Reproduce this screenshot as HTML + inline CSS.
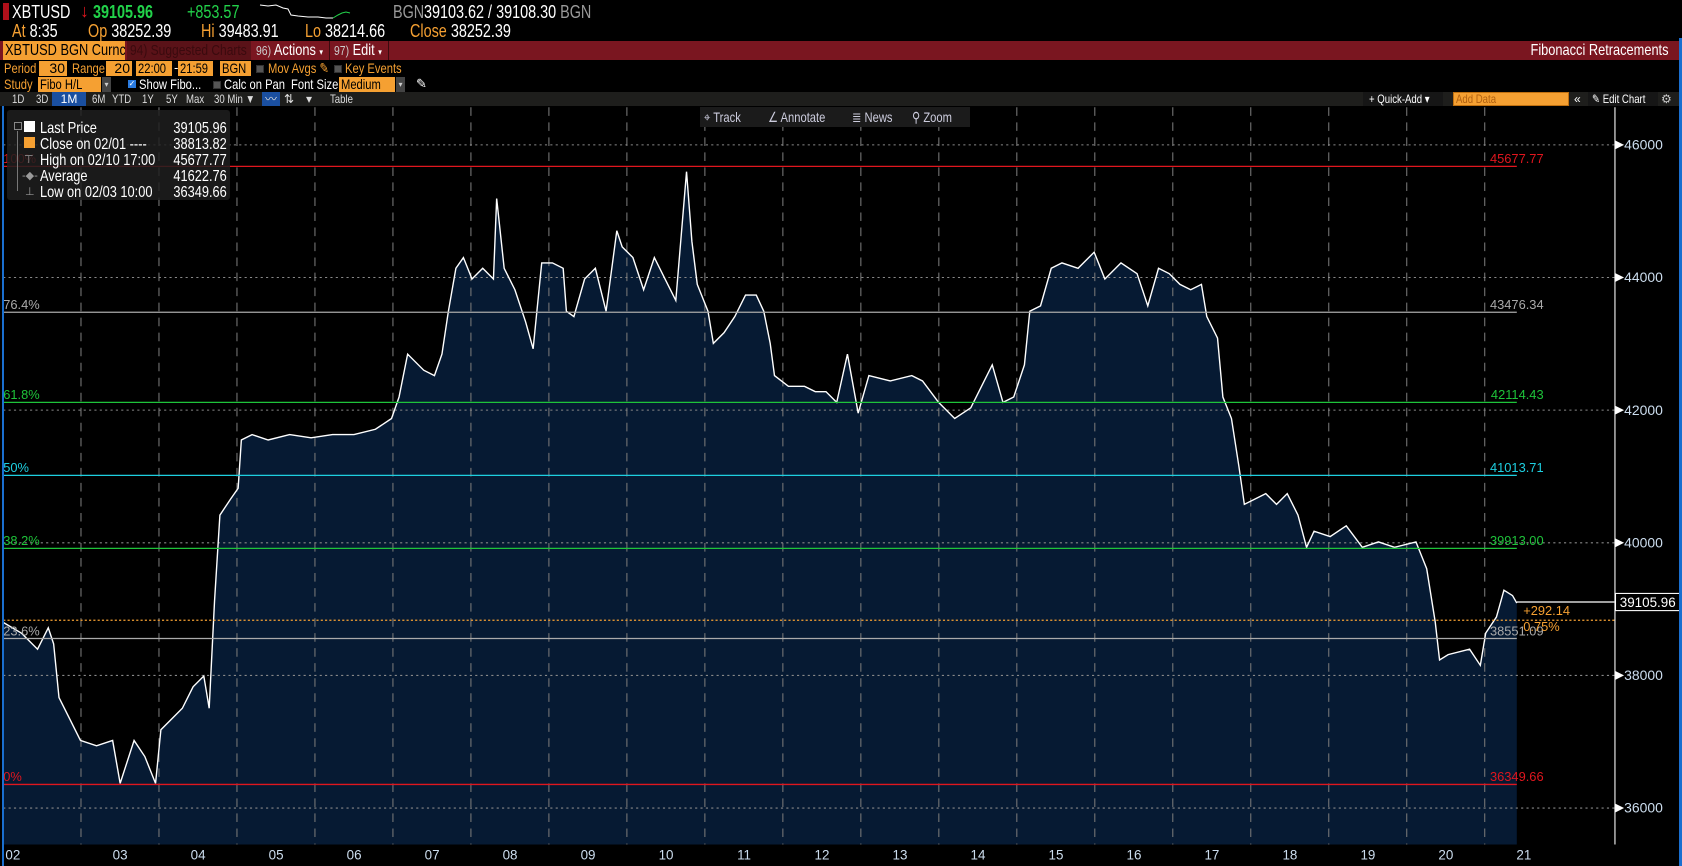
<!DOCTYPE html>
<html><head><meta charset="utf-8"><style>
*{margin:0;padding:0;box-sizing:border-box}
body{width:1682px;height:866px;background:#000;overflow:hidden;position:relative;font-family:"Liberation Sans",sans-serif;color:#fff}
.a{position:absolute;white-space:nowrap;line-height:1}
.n{display:inline-block;transform:scaleX(.8);transform-origin:0 50%;white-space:nowrap}
.r{transform-origin:100% 50%}
.o{color:#f5a032}.g{color:#22d24a}.w{color:#fff}.gr{color:#9a9a9a}
.box{position:absolute;background:#f5a032;color:#000;font-size:14px;line-height:15px;height:15px;padding:0 2px;overflow:hidden;white-space:nowrap}
.cb{position:absolute;width:8px;height:8px;background:#555;border:1px solid #333}
.s{font-size:14px;color:#f5a032}
.tab{position:absolute;top:92px;height:14px;font-size:12px;line-height:14px;color:#ddd;white-space:nowrap}
</style></head><body>
<svg style="position:absolute;left:0;top:0" width="1682" height="866" viewBox="0 0 1568 807" preserveAspectRatio="none">
<rect x="0" y="100" width="1414" height="687" fill="#000"/>
<polygon fill="#061a33" points="3,787 3,580 20,590 35,605 45,585 50,600 55,650 65,670 75,690 90,695 105,690 112,730 125,690 135,705 145,730 150,680 160,670 170,660 180,640 190,630 195,660 200,560 205,480 215,465 222,455 225,410 235,405 250,410 270,405 290,408 310,405 330,405 350,400 365,390 372,370 380,330 395,345 405,350 412,330 418,290 425,250 432,240 440,260 450,250 460,260 463,185 470,250 480,270 490,300 497,325 505,245 515,245 525,250 528,290 535,295 545,260 555,250 565,290 575,215 580,230 590,240 600,270 610,240 620,260 630,280 640,160 645,225 650,265 660,290 665,320 675,310 685,295 695,275 705,275 712,290 718,320 722,350 735,360 750,360 760,365 770,365 780,375 790,330 800,385 810,350 830,355 850,350 860,355 875,375 890,390 905,380 915,360 925,340 935,375 945,370 955,340 960,290 970,285 980,250 990,245 1005,250 1020,235 1030,260 1045,245 1060,255 1070,285 1080,250 1090,255 1100,265 1110,270 1120,265 1125,295 1135,315 1140,370 1148,390 1155,435 1160,470 1170,465 1180,460 1190,470 1200,460 1210,480 1218,510 1225,495 1240,500 1255,490 1270,510 1285,505 1300,510 1320,505 1330,530 1338,580 1342,615 1350,610 1370,605 1380,620 1385,590 1395,575 1402,550 1410,555 1414,562 1414,787"/>
<g stroke="#777" stroke-dasharray="8 6" stroke-width="1">
<line x1="75.5" y1="100" x2="75.5" y2="787"/><line x1="148.2" y1="100" x2="148.2" y2="787"/><line x1="220.9" y1="100" x2="220.9" y2="787"/><line x1="293.6" y1="100" x2="293.6" y2="787"/><line x1="366.3" y1="100" x2="366.3" y2="787"/><line x1="439" y1="100" x2="439" y2="787"/><line x1="511.7" y1="100" x2="511.7" y2="787"/><line x1="584.4" y1="100" x2="584.4" y2="787"/><line x1="657.1" y1="100" x2="657.1" y2="787"/><line x1="729.8" y1="100" x2="729.8" y2="787"/><line x1="802.5" y1="100" x2="802.5" y2="787"/><line x1="875.2" y1="100" x2="875.2" y2="787"/><line x1="947.9" y1="100" x2="947.9" y2="787"/><line x1="1020.6" y1="100" x2="1020.6" y2="787"/><line x1="1093.3" y1="100" x2="1093.3" y2="787"/><line x1="1166" y1="100" x2="1166" y2="787"/><line x1="1238.7" y1="100" x2="1238.7" y2="787"/><line x1="1311.4" y1="100" x2="1311.4" y2="787"/><line x1="1384.1" y1="100" x2="1384.1" y2="787"/>
</g>
<g stroke="#888" stroke-dasharray="2 3" stroke-width="1">
<line x1="3" y1="135" x2="1505" y2="135"/><line x1="3" y1="258.6" x2="1505" y2="258.6"/><line x1="3" y1="382.2" x2="1505" y2="382.2"/><line x1="3" y1="505.8" x2="1505" y2="505.8"/><line x1="3" y1="629.4" x2="1505" y2="629.4"/><line x1="3" y1="753" x2="1505" y2="753"/>
</g>
<polyline fill="none" stroke="#fff" stroke-width="1.3" points="3,580 20,590 35,605 45,585 50,600 55,650 65,670 75,690 90,695 105,690 112,730 125,690 135,705 145,730 150,680 160,670 170,660 180,640 190,630 195,660 200,560 205,480 215,465 222,455 225,410 235,405 250,410 270,405 290,408 310,405 330,405 350,400 365,390 372,370 380,330 395,345 405,350 412,330 418,290 425,250 432,240 440,260 450,250 460,260 463,185 470,250 480,270 490,300 497,325 505,245 515,245 525,250 528,290 535,295 545,260 555,250 565,290 575,215 580,230 590,240 600,270 610,240 620,260 630,280 640,160 645,225 650,265 660,290 665,320 675,310 685,295 695,275 705,275 712,290 718,320 722,350 735,360 750,360 760,365 770,365 780,375 790,330 800,385 810,350 830,355 850,350 860,355 875,375 890,390 905,380 915,360 925,340 935,375 945,370 955,340 960,290 970,285 980,250 990,245 1005,250 1020,235 1030,260 1045,245 1060,255 1070,285 1080,250 1090,255 1100,265 1110,270 1120,265 1125,295 1135,315 1140,370 1148,390 1155,435 1160,470 1170,465 1180,460 1190,470 1200,460 1210,480 1218,510 1225,495 1240,500 1255,490 1270,510 1285,505 1300,510 1320,505 1330,530 1338,580 1342,615 1350,610 1370,605 1380,620 1385,590 1395,575 1402,550 1410,555 1414,562"/>
<g stroke-width="1.2">
<line x1="3" y1="155" x2="1414" y2="155" stroke="#e0161e"/>
<line x1="3" y1="291" x2="1414" y2="291" stroke="#aaa"/>
<line x1="3" y1="375" x2="1414" y2="375" stroke="#1ec33a"/>
<line x1="3" y1="443" x2="1414" y2="443" stroke="#1ecfe0"/>
<line x1="3" y1="511" x2="1414" y2="511" stroke="#1ec33a"/>
<line x1="3" y1="595" x2="1414" y2="595" stroke="#aaa"/>
<line x1="3" y1="731" x2="1414" y2="731" stroke="#e0161e"/>
<line x1="3" y1="578" x2="1505" y2="578" stroke="#f5a032" stroke-dasharray="2 2"/>
<line x1="1414" y1="561" x2="1505" y2="561" stroke="#fff"/>
</g>
<g font-family="Liberation Sans, sans-serif" font-size="12">
<text x="3" y="152" fill="#e0161e">100%</text><text x="1439" y="152" fill="#e0161e" text-anchor="end">45677.77</text>
<text x="3" y="288" fill="#aaa">76.4%</text><text x="1439" y="288" fill="#aaa" text-anchor="end">43476.34</text>
<text x="3" y="372" fill="#1ec33a">61.8%</text><text x="1439" y="372" fill="#1ec33a" text-anchor="end">42114.43</text>
<text x="3" y="440" fill="#1ecfe0">50%</text><text x="1439" y="440" fill="#1ecfe0" text-anchor="end">41013.71</text>
<text x="3" y="508" fill="#1ec33a">38.2%</text><text x="1439" y="508" fill="#1ec33a" text-anchor="end">39913.00</text>
<text x="3" y="592" fill="#aaa">23.6%</text><text x="1439" y="592" fill="#aaa" text-anchor="end">38551.09</text>
<text x="3" y="728" fill="#e0161e">0%</text><text x="1439" y="728" fill="#e0161e" text-anchor="end">36349.66</text>
<text x="1420" y="573" fill="#f5a032">+292.14</text><text x="1420" y="588" fill="#f5a032">0.75%</text>
</g>
<line x1="1505.5" y1="100" x2="1505.5" y2="787" stroke="#fff" stroke-width="1"/>
<g font-family="Liberation Sans, sans-serif" font-size="13" fill="#cde">
<text x="1514" y="139.5">46000</text><text x="1514" y="263">44000</text><text x="1514" y="386.5">42000</text><text x="1514" y="510">40000</text><text x="1514" y="633.5">38000</text><text x="1514" y="757">36000</text>
</g>
<g fill="#fff"><path d="M1506 131l8 4-8 4z"/><path d="M1506 254.6l8 4-8 4z"/><path d="M1506 378.2l8 4-8 4z"/><path d="M1506 501.8l8 4-8 4z"/><path d="M1506 625.4l8 4-8 4z"/><path d="M1506 749l8 4-8 4z"/></g>
<rect x="1506" y="553" width="61" height="16" fill="#000" stroke="#fff"/>
<text x="1510" y="565.5" font-family="Liberation Sans, sans-serif" font-size="12.5" fill="#fff">39105.96</text>
<g font-family="Liberation Sans, sans-serif" font-size="12.5" fill="#cde" text-anchor="middle">
<text x="12" y="801">02</text><text x="112" y="801">03</text><text x="184.7" y="801">04</text><text x="257.4" y="801">05</text><text x="330.1" y="801">06</text><text x="402.8" y="801">07</text><text x="475.5" y="801">08</text><text x="548.2" y="801">09</text><text x="620.9" y="801">10</text><text x="693.6" y="801">11</text><text x="766.3" y="801">12</text><text x="839" y="801">13</text><text x="911.7" y="801">14</text><text x="984.4" y="801">15</text><text x="1057.1" y="801">16</text><text x="1129.8" y="801">17</text><text x="1202.5" y="801">18</text><text x="1275.2" y="801">19</text><text x="1347.9" y="801">20</text><text x="1420.6" y="801">21</text>
</g>
</svg>
<div style="position:absolute;left:2px;top:92px;width:2px;height:774px;background:#1a6fd0"></div>
<div style="position:absolute;left:1679px;top:38px;width:3px;height:828px;background:#1a6fd0"></div>

<!-- header -->
<div style="position:absolute;left:3px;top:3px;width:6px;height:17px;background:#b0101a"></div>
<div class="a w" style="left:12px;top:3px;font-size:18px"><span class="n">XBTUSD</span></div>
<div class="a" style="left:80px;top:2px;font-size:18px;color:#e0161e">↓</div>
<div class="a g" style="left:93px;top:3px;font-size:18px;font-weight:bold"><span class="n">39105.96</span></div>
<div class="a g" style="left:187px;top:3px;font-size:18px"><span class="n">+853.57</span></div>
<svg style="position:absolute;left:258px;top:3px" width="95" height="18"><polyline fill="none" stroke="#fff" stroke-width="1" points="2,2 10,3 18,2 25,5 30,6 33,12 40,13 50,14 60,14 68,15 75,15"/><polyline fill="none" stroke="#22d24a" stroke-width="1" points="75,15 80,12 84,10 88,9 92,10"/></svg>
<div class="a gr" style="left:393px;top:3px;font-size:18px"><span class="n">BGN</span></div>
<div class="a w" style="left:424px;top:3px;font-size:18px"><span class="n">39103.62 / 39108.30 <span class="gr">BGN</span></span></div>
<div class="a" style="left:12px;top:22px;font-size:18px"><span class="n"><span class="o">At</span> 8:35</span></div>
<div class="a" style="left:88px;top:22px;font-size:18px"><span class="n"><span class="o">Op</span> 38252.39</span></div>
<div class="a" style="left:201px;top:22px;font-size:18px"><span class="n"><span class="o">Hi</span> 39483.91</span></div>
<div class="a" style="left:305px;top:22px;font-size:18px"><span class="n"><span class="o">Lo</span> 38214.66</span></div>
<div class="a" style="left:410px;top:22px;font-size:18px"><span class="n"><span class="o">Close</span> 38252.39</span></div>

<div style="position:absolute;left:0;top:41px;width:1679px;height:19px;background:#7a1620"></div>
<div class="a" style="left:3px;top:41px;width:122px;height:19px;background:#f5a032;color:#000;font-size:16px;line-height:19px;padding-left:2px;overflow:hidden"><span class="n">XBTUSD BGN Curncy</span></div>
<div class="a" style="left:127px;top:41px;width:124px;height:19px;background:#5a1218;color:#3a0a0e;font-size:15px;line-height:19px;padding-left:3px;overflow:hidden"><span class="n">94) Suggested Charts</span></div>
<div class="a" style="left:256px;top:41px;height:19px;font-size:16px;line-height:19px"><span class="n"><span style="color:#ccc;font-size:13px">96)</span> Actions <span style="font-size:9px">▾</span></span></div>
<div class="a" style="left:329px;top:41px;width:1px;height:19px;background:#3a0a0e"></div>
<div class="a" style="left:334px;top:41px;height:19px;font-size:16px;line-height:19px"><span class="n"><span style="color:#ccc;font-size:13px">97)</span> Edit <span style="font-size:9px">▾</span></span></div>
<div class="a" style="left:388px;top:41px;width:1px;height:19px;background:#3a0a0e"></div>
<div class="a w" style="left:1469px;top:43px;width:200px;text-align:right;font-size:16px"><span class="n r">Fibonacci Retracements</span></div>

<div class="a s" style="left:4px;top:61px"><span class="n">Period</span></div>
<div class="box" style="left:39px;top:61px;width:28px;text-align:right">30</div>
<div class="a s" style="left:72px;top:61px"><span class="n">Range</span></div>
<div class="box" style="left:106px;top:61px;width:26px;text-align:right">20</div>
<div class="box" style="left:136px;top:61px;width:36px"><span class="n">22:00</span></div>
<div class="a w" style="left:174px;top:61px;font-size:13px">-</div>
<div class="box" style="left:178px;top:61px;width:35px"><span class="n">21:59</span></div>
<div class="box" style="left:220px;top:61px;width:31px"><span class="n">BGN</span></div>
<div class="cb" style="left:256px;top:65px"></div>
<div class="a s" style="left:268px;top:61px"><span class="n">Mov Avgs ✎</span></div>
<div class="cb" style="left:334px;top:65px"></div>
<div class="a s" style="left:345px;top:61px"><span class="n">Key Events</span></div>

<div class="a s" style="left:4px;top:77px"><span class="n">Study</span></div>
<div class="box" style="left:38px;top:77px;width:63px"><span class="n">Fibo H/L</span></div>
<div class="a" style="left:102px;top:77px;width:9px;height:15px;background:#444;color:#ccc;font-size:8px;line-height:15px;text-align:center">▾</div>
<div class="a" style="left:128px;top:80px;width:8px;height:8px;background:#2a7be0;color:#fff;font-size:8px;line-height:8px;text-align:center">✓</div>
<div class="a w" style="left:139px;top:77px;font-size:14px"><span class="n">Show Fibo...</span></div>
<div class="cb" style="left:213px;top:81px"></div>
<div class="a w" style="left:224px;top:77px;font-size:14px"><span class="n">Calc on Pan</span></div>
<div class="a w" style="left:291px;top:77px;font-size:14px"><span class="n">Font Size</span></div>
<div class="box" style="left:339px;top:77px;width:56px"><span class="n">Medium</span></div>
<div class="a" style="left:396px;top:77px;width:9px;height:15px;background:#444;color:#ccc;font-size:8px;line-height:15px;text-align:center">▾</div>
<div class="a w" style="left:416px;top:77px;font-size:13px">✎</div>

<div style="position:absolute;left:0;top:92px;width:1679px;height:14px;background:#1e1e1c"></div>
<div class="tab" style="left:12px"><span class="n">1D</span></div><div class="tab" style="left:36px"><span class="n">3D</span></div>
<div class="tab" style="left:52px;width:34px;background:#1a4fa0;text-align:center;color:#fff">1M</div>
<div class="tab" style="left:92px"><span class="n">6M</span></div><div class="tab" style="left:112px"><span class="n">YTD</span></div><div class="tab" style="left:142px"><span class="n">1Y</span></div><div class="tab" style="left:166px"><span class="n">5Y</span></div><div class="tab" style="left:186px"><span class="n">Max</span></div>
<div class="tab" style="left:214px"><span class="n">30 Min ▼</span></div>
<div class="tab" style="left:262px;width:18px;background:#1a4fa0;text-align:center">〰</div>
<div class="tab" style="left:284px">⇅</div><div class="tab" style="left:306px">▾</div>
<div class="tab" style="left:330px"><span class="n">Table</span></div>
<div class="tab" style="left:1363px;width:80px;background:#161616;padding-left:6px;color:#fff"><span class="n">+ Quick-Add ▾</span></div>
<div class="tab" style="left:1453px;width:116px;background:#f5a032;color:#b06010;padding-left:2px;border:1px solid #c07010;line-height:12px"><span class="n">Add Data</span></div>
<div class="tab" style="left:1574px;color:#fff">«</div>
<div class="tab" style="left:1588px;width:70px;background:#161616;color:#fff;padding-left:4px"><span class="n">✎ Edit Chart</span></div>
<div class="tab" style="left:1661px;color:#ccc">⚙</div>

<div class="a" style="left:700px;top:107px;width:270px;height:20px;background:#1b1b1b"></div>
<div class="a" style="left:704px;top:110px;font-size:14px;color:#ccd"><span class="n">⌖ Track</span></div>
<div class="a" style="left:768px;top:110px;font-size:14px;color:#ccd"><span class="n">∠ Annotate</span></div>
<div class="a" style="left:852px;top:110px;font-size:14px;color:#ccd"><span class="n">≣ News</span></div>
<div class="a" style="left:912px;top:110px;font-size:14px;color:#ccd"><span class="n">⚲ Zoom</span></div>

<div class="a" style="left:7px;top:110px;width:223px;height:90px;background:rgba(30,30,30,.85);border-radius:3px"></div>
<div class="a" style="left:14px;top:122px;width:8px;height:8px;border:1px solid #888"></div>
<div class="a" style="left:24px;top:121px;width:11px;height:11px;background:#fff"></div>
<div class="a" style="left:24px;top:137px;width:11px;height:11px;background:#f5a032"></div>
<div class="a" style="left:17px;top:131px;width:1px;height:60px;background:#777"></div>
<div class="a gr" style="left:24px;top:155px;font-size:11px">⊤</div>
<div class="a gr" style="left:22px;top:171px;font-size:11px">-◆-</div>
<div class="a gr" style="left:25px;top:187px;font-size:11px">⊥</div>
<div class="a w" style="left:40px;top:121px;font-size:16px;line-height:16px"><span class="n">Last Price<br>Close on 02/01 ----<br>High on 02/10 17:00<br>Average<br>Low on 02/03 10:00</span></div>
<div class="a w" style="left:160px;top:121px;width:62px;text-align:right;font-size:16px;line-height:16px"><span class="n r">39105.96<br>38813.82<br>45677.77<br>41622.76<br>36349.66</span></div>
</body></html>
